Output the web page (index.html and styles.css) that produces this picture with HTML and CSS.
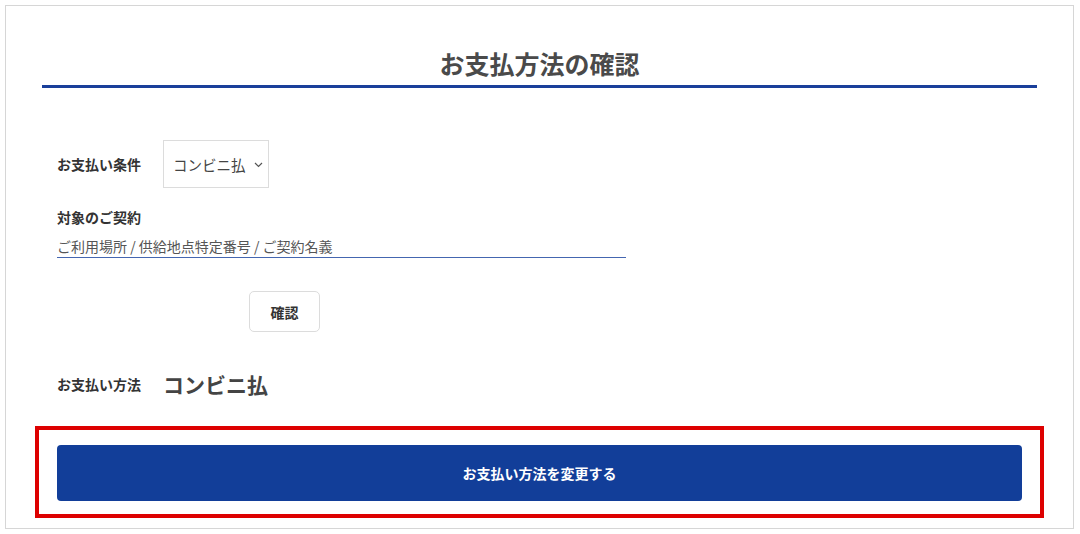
FILE: index.html
```html
<!DOCTYPE html>
<html lang="ja">
<head>
    <meta charset="UTF-8">
    <meta name="viewport" content="width=device-width, initial-scale=1.0">
    <title>お支払方法の確認</title>
    <link rel="stylesheet" href="styles.css">
</head>
<body>
    <div class="frame">
        <h1 class="title">お支払方法の確認</h1>

        <div class="form">
            <div class="row">
                <span class="label">お支払い条件</span>
                <div class="select">
                    <span>コンビニ払</span>
                    <svg class="chevron" width="9" height="6" viewBox="0 0 9 6"><path d="M1 1l3.5 3.5L8 1" fill="none" stroke="#555" stroke-width="1.2"/></svg>
                </div>
            </div>

            <div class="label contract-label">対象のご契約</div>
            <div class="contract">ご利用場所 / 供給地点特定番号 / ご契約名義</div>

            <div class="confirm-wrap">
                <button class="confirm">確認</button>
            </div>

            <div class="row method">
                <span class="label">お支払い方法</span>
                <span class="method-value">コンビニ払</span>
            </div>
        </div>

        <div class="highlight">
            <button class="change">お支払い方法を変更する</button>
        </div>
    </div>
</body>
</html>
```

FILE: styles.css
```css
body {
    margin: 0;
    font-family: "Noto Sans CJK JP", "Noto Sans", sans-serif;
    color: #333;
    background: #fff;
}
.frame {
    margin: 5px 6px 5px 5px;
    height: 524px;
    box-sizing: border-box;
    border: 1px solid #d6d6d6;
    padding: 0 29px;
}
.title {
    margin: 42px 7px 0;
    padding-bottom: 7px;
    border-bottom: 3px solid #1a3f9a;
    text-align: center;
    font-size: 25px;
    line-height: 30px;
    font-weight: bold;
    color: #4a4a4a;
}
.form {
    padding: 0 22px;
}
.row {
    display: flex;
    align-items: center;
}
.row:first-child {
    margin-top: 52px;
}
.label {
    width: 106px;
    font-size: 14px;
    line-height: 20px;
    font-weight: bold;
    color: #333;
}
.select {
    width: 106px;
    height: 48px;
    box-sizing: border-box;
    border: 1px solid #dcdcdc;
    display: flex;
    align-items: center;
    padding: 0 0 0 9px;
    gap: 8px;
    font-size: 14.5px;
    color: #444;
}
.chevron {
    margin-top: 2px;
}
.contract-label {
    margin-top: 19px;
}
.contract {
    width: 569px;
    margin-top: 9px;
    padding-bottom: 1px;
    border-bottom: 1px solid #4466b0;
    font-size: 14px;
    line-height: 20px;
    color: #555;
}
.confirm-wrap {
    margin-top: 33px;
    padding-left: 192px;
}
.confirm {
    width: 71px;
    height: 41px;
    border: 1px solid #dcdcdc;
    border-radius: 5px;
    background: #fff;
    font-family: inherit;
    font-size: 14px;
    font-weight: bold;
    color: #333;
}
.method {
    margin-top: 37px;
    height: 30px;
}
.method-value {
    font-size: 21px;
    font-weight: bold;
    color: #444;
}
.highlight {
    margin-top: 27px;
    border: 4px solid #dd0000;
    padding: 15px 18px 13px;
}
.change {
    display: block;
    width: 100%;
    height: 56px;
    border: none;
    border-radius: 4px;
    background: #123e99;
    color: #fff;
    font-family: inherit;
    font-size: 14px;
    font-weight: bold;
}
```
